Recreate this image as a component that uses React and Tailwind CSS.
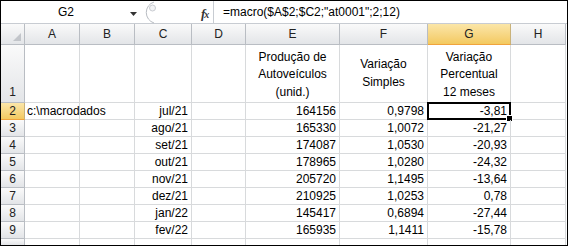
import React from "react";

const cols = ["A", "B", "C", "D", "E", "F", "G", "H"];
const rows = [
  ["jul/21", "164156", "0,9798", "-3,81"],
  ["ago/21", "165330", "1,0072", "-21,27"],
  ["set/21", "174087", "1,0530", "-20,93"],
  ["out/21", "178965", "1,0280", "-24,32"],
  ["nov/21", "205720", "1,1495", "-13,64"],
  ["dez/21", "210925", "1,0253", "0,78"],
  ["jan/22", "145417", "0,6894", "-27,44"],
  ["fev/22", "165935", "1,1411", "-15,78"],
];

const hdr = "bg-gradient-to-b from-[#fafafa] to-[#e3e5e8] border-r border-b border-[#b9bdc3] text-[#222] flex items-center justify-center";
const sel = "bg-gradient-to-b from-[#fbe6a8] to-[#f3c95f] border-r border-b border-r-[#c9b27a] border-b-[#f0a33d] text-[#222] flex items-center justify-center";
const cell = "border-r border-b border-[#d8dadc] text-black flex items-center";

export default function App() {
  return (
    <div className="w-[572px] h-[251px] bg-white font-['Liberation_Sans',Arial,sans-serif] text-[12px]">
      <div className="w-[568px] h-[246px] border border-black overflow-hidden">
        {/* formula bar */}
        <div className="h-[23px] flex border-b border-[#c8ccd2] bg-white">
          <div className="w-[142px] relative flex items-center">
            <span className="w-[130px] text-center">G2</span>
            <svg width="7" height="4" viewBox="0 0 7 4" className="absolute left-[129px] top-[11px]">
              <path d="M0 0H7L3.5 4Z" fill="#333" />
            </svg>
          </div>
          <div className="w-[70px] relative">
            <svg width="24" height="23" viewBox="0 0 24 23" className="absolute left-[0px] top-0">
              <path d="M11 1 A11 11 0 0 0 11 22" fill="none" stroke="#b8bcc2" strokeWidth="1" />
              <circle cx="9.5" cy="7" r="3" fill="#f2f3f5" stroke="#c9ccd1" strokeWidth="1" />
            </svg>
            <span className="absolute left-[58px] top-[3px] font-['Liberation_Serif',serif] italic font-bold text-[13px] text-[#333] tracking-[-1px]">f<span className="text-[10px]">x</span></span>
          </div>
          <div className="flex-1 border-l border-[#c8ccd2] flex items-center pl-[9px]">
            =macro($A$2;$C2;"at0001";2;12)
          </div>
        </div>
        {/* grid */}
        <div className="grid grid-cols-[24px_55px_55px_57px_54px_94px_88px_83px_55px] grid-rows-[21px_58px_repeat(8,17px)_6px]">
          <div className={hdr + " relative"}>
            <svg width="8" height="8" viewBox="0 0 8 8" className="absolute right-[3px] bottom-[3px]">
              <path d="M8 0V8H0Z" fill="#c2c5ca" />
            </svg>
          </div>
          {cols.map((c) => (
            <div key={c} className={c === "G" ? sel : hdr}>{c}</div>
          ))}
          {/* row 1 */}
          <div className={hdr + " !items-end pb-[1px]"}>1</div>
          <div className={cell} />
          <div className={cell} />
          <div className={cell} />
          <div className={cell} />
          <div className={cell + " flex-col justify-end text-center leading-[17.5px] pb-[1px]"}>
            <span>Produção de</span>
            <span>Autoveículos</span>
            <span>(unid.)</span>
          </div>
          <div className={cell + " flex-col justify-center text-center leading-[17.5px]"}>
            <span>Variação</span>
            <span>Simples</span>
          </div>
          <div className={cell + " flex-col justify-end text-center leading-[17.5px] pb-[1px]"}>
            <span>Variação</span>
            <span>Percentual</span>
            <span>12 meses</span>
          </div>
          <div className={cell} />
          {rows.map((r, i) => {
            const n = i + 2;
            return (
              <React.Fragment key={n}>
                <div className={n === 2 ? sel : hdr}>{n}</div>
                <div className={cell + " pl-[2px] whitespace-nowrap overflow-visible"}>{n === 2 ? "c:\\macrodados" : ""}</div>
                <div className={cell} />
                <div className={cell + " justify-end pr-[3px]"}>{r[0]}</div>
                <div className={cell} />
                <div className={cell + " justify-end pr-[3px]"}>{r[1]}</div>
                <div className={cell + " justify-end pr-[3px]"}>{r[2]}</div>
                <div className={cell + " justify-end pr-[3px] relative"}>
                  {r[3]}
                  {n === 2 && (
                    <>
                      <div className="absolute -left-[1px] -top-[1px] -right-[1px] -bottom-[1px] border-2 border-black" />
                      <div className="absolute -right-[3px] -bottom-[3px] w-[5px] h-[5px] bg-black border border-white box-content" />
                    </>
                  )}
                </div>
                <div className={cell} />
              </React.Fragment>
            );
          })}
          <div className={hdr + " !border-b-0"} />
          {cols.map((c) => (
            <div key={c} className="border-r border-[#d8dadc]" />
          ))}
        </div>
      </div>
    </div>
  );
}
